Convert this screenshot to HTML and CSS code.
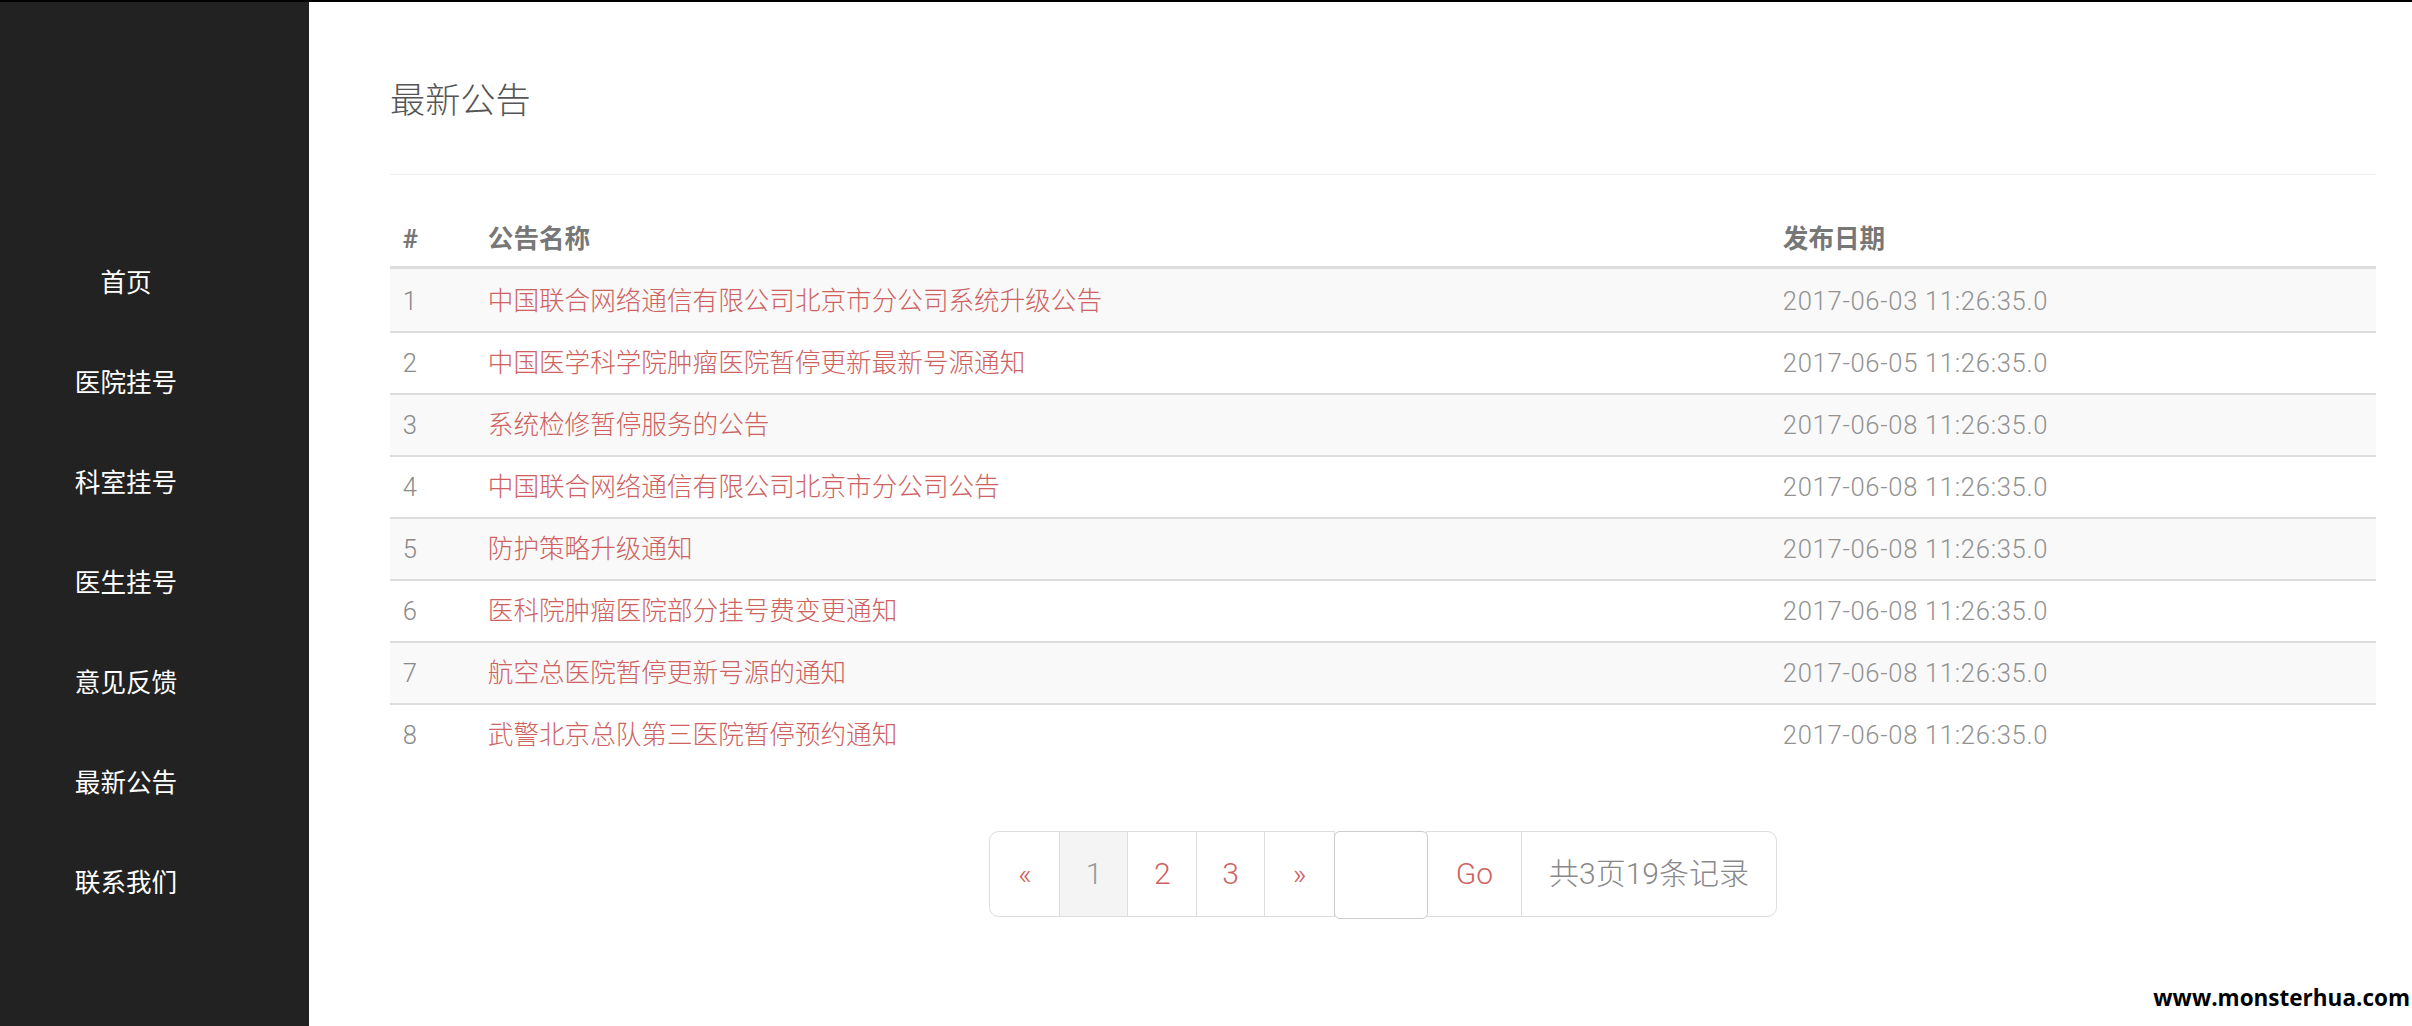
FILE: index.html
```html
<!DOCTYPE html>
<html lang="zh-CN">

<head>
    <meta charset="UTF-8">
    <meta name="viewport" content="width=device-width, initial-scale=1.0">
    <title>最新公告</title>
    <link rel="stylesheet" href="styles.css">
</head>

<body>
    <div class="layout">
        <aside class="sidebar">
            <ul class="side-nav">
                <li><a href="#">首页</a></li>
                <li><a href="#">医院挂号</a></li>
                <li><a href="#">科室挂号</a></li>
                <li><a href="#">医生挂号</a></li>
                <li><a href="#">意见反馈</a></li>
                <li><a href="#">最新公告</a></li>
                <li><a href="#">联系我们</a></li>
            </ul>
        </aside>

        <main class="content">
            <div class="page-header">
                <h1>最新公告</h1>
            </div>

            <table class="notice-table">
                <thead>
                    <tr>
                        <th class="col-no">#</th>
                        <th class="col-name">公告名称</th>
                        <th>发布日期</th>
                    </tr>
                </thead>
                <tbody>
                    <tr>
                        <td>1</td>
                        <td><a href="#">中国联合网络通信有限公司北京市分公司系统升级公告</a></td>
                        <td class="date">2017-06-03 11:26:35.0</td>
                    </tr>
                    <tr>
                        <td>2</td>
                        <td><a href="#">中国医学科学院肿瘤医院暂停更新最新号源通知</a></td>
                        <td class="date">2017-06-05 11:26:35.0</td>
                    </tr>
                    <tr>
                        <td>3</td>
                        <td><a href="#">系统检修暂停服务的公告</a></td>
                        <td class="date">2017-06-08 11:26:35.0</td>
                    </tr>
                    <tr>
                        <td>4</td>
                        <td><a href="#">中国联合网络通信有限公司北京市分公司公告</a></td>
                        <td class="date">2017-06-08 11:26:35.0</td>
                    </tr>
                    <tr>
                        <td>5</td>
                        <td><a href="#">防护策略升级通知</a></td>
                        <td class="date">2017-06-08 11:26:35.0</td>
                    </tr>
                    <tr>
                        <td>6</td>
                        <td><a href="#">医科院肿瘤医院部分挂号费变更通知</a></td>
                        <td class="date">2017-06-08 11:26:35.0</td>
                    </tr>
                    <tr>
                        <td>7</td>
                        <td><a href="#">航空总医院暂停更新号源的通知</a></td>
                        <td class="date">2017-06-08 11:26:35.0</td>
                    </tr>
                    <tr>
                        <td>8</td>
                        <td><a href="#">武警北京总队第三医院暂停预约通知</a></td>
                        <td class="date">2017-06-08 11:26:35.0</td>
                    </tr>
                </tbody>
            </table>

            <div class="pager-wrap">
                <ul class="pagination">
                    <li><a href="#" class="arrow">&laquo;</a></li>
                    <li class="active"><span>1</span></li>
                    <li><a href="#">2</a></li>
                    <li><a href="#">3</a></li>
                    <li><a href="#" class="arrow">&raquo;</a></li>
                    <li class="jump"><input type="text" class="page-input"></li>
                    <li><a href="#" class="go">Go</a></li>
                    <li class="total"><span>共3页19条记录</span></li>
                </ul>
            </div>
        </main>
    </div>

    <div class="watermark">www.monsterhua.com</div>
</body>

</html>
```

FILE: styles.css
```css
/* Reset */
* {
    margin: 0;
    padding: 0;
    box-sizing: border-box;
}

html,
body {
    height: 100%;
}

body {
    font-family: Roboto, "Noto Sans CJK SC", sans-serif;
    font-weight: 300;
    font-size: 25.6px;
    color: #777;
    background-color: #fff;
    border-top: 2px solid #000;
    position: relative;
}

a {
    color: #cd625f;
    text-decoration: none;
}

.layout {
    display: flex;
    height: 100%;
}

/* Sidebar */
.sidebar {
    width: 309px;
    flex-shrink: 0;
    background: #222;
}

.side-nav {
    list-style: none;
    width: 252px;
    padding-top: 228px;
}

.side-nav a {
    display: flex;
    align-items: center;
    justify-content: center;
    height: 100px;
    color: #fff;
    font-weight: 400;
    font-size: 25.6px;
}

/* Content */
.content {
    flex: 1;
    padding: 0 36px 0 81px;
}

.page-header {
    padding: 80px 0 53px;
    border-bottom: 1.6px solid #eee;
}

.page-header h1 {
    font-size: 35.2px;
    line-height: 1.1;
    font-weight: 300;
    color: #555;
}

.notice-table {
    width: 100%;
    margin-top: 34px;
    border-collapse: separate;
    border-spacing: 0;
}

.notice-table th,
.notice-table td {
    text-align: left;
    padding: 12px 12.8px;
    line-height: 36px;
}

.notice-table th {
    font-weight: 700;
    color: #777;
    padding-bottom: 9px;
    border-bottom: 3px solid #ddd;
}

.notice-table td {
    border-top: 2px solid #ddd;
    color: #8a8a8a;
}

.notice-table td.date {
    letter-spacing: 0.7px;
    color: #929292;
}

.notice-table tbody tr:first-child td {
    border-top: 0;
    padding-top: 14px;
}

.notice-table tbody tr:nth-child(odd) td {
    background-color: #f9f9f9;
}

.notice-table .col-no {
    width: 85px;
}

.notice-table .col-name {
    width: 1295px;
}

/* Pagination */
.pager-wrap {
    text-align: center;
    margin-top: 66px;
}

.pagination {
    display: inline-flex;
    list-style: none;
}

.pagination li > a,
.pagination li > span {
    display: block;
    padding: 23px 25.6px;
    font-size: 30px;
    line-height: 38.4px;
    border: 1.6px solid #ddd;
    margin-left: -1.6px;
    background: #fff;
}

.pagination li > a.arrow {
    padding: 23px 28px;
}

.pagination li > a.go {
    padding: 23px 28.5px;
}

.pagination li:first-child > a {
    margin-left: 0;
    border-radius: 9.6px 0 0 9.6px;
}

.pagination li:last-child > span {
    border-radius: 0 9.6px 9.6px 0;
    padding: 23px 27px;
}

.pagination .active > span {
    background: #f4f4f4;
    color: #999;
}

.pagination .total > span {
    color: #888;
}

.page-input {
    display: block;
    width: 94px;
    height: 88px;
    margin-left: -1.6px;
    border: 1.6px solid #ccc;
    border-radius: 6px;
    font-size: 28.8px;
    position: relative;
}

.watermark {
    position: absolute;
    right: 2px;
    bottom: 17px;
    font-family: "Open Sans", sans-serif;
    font-weight: 700;
    font-size: 22.5px;
    line-height: 1;
    color: #000;
}
```
